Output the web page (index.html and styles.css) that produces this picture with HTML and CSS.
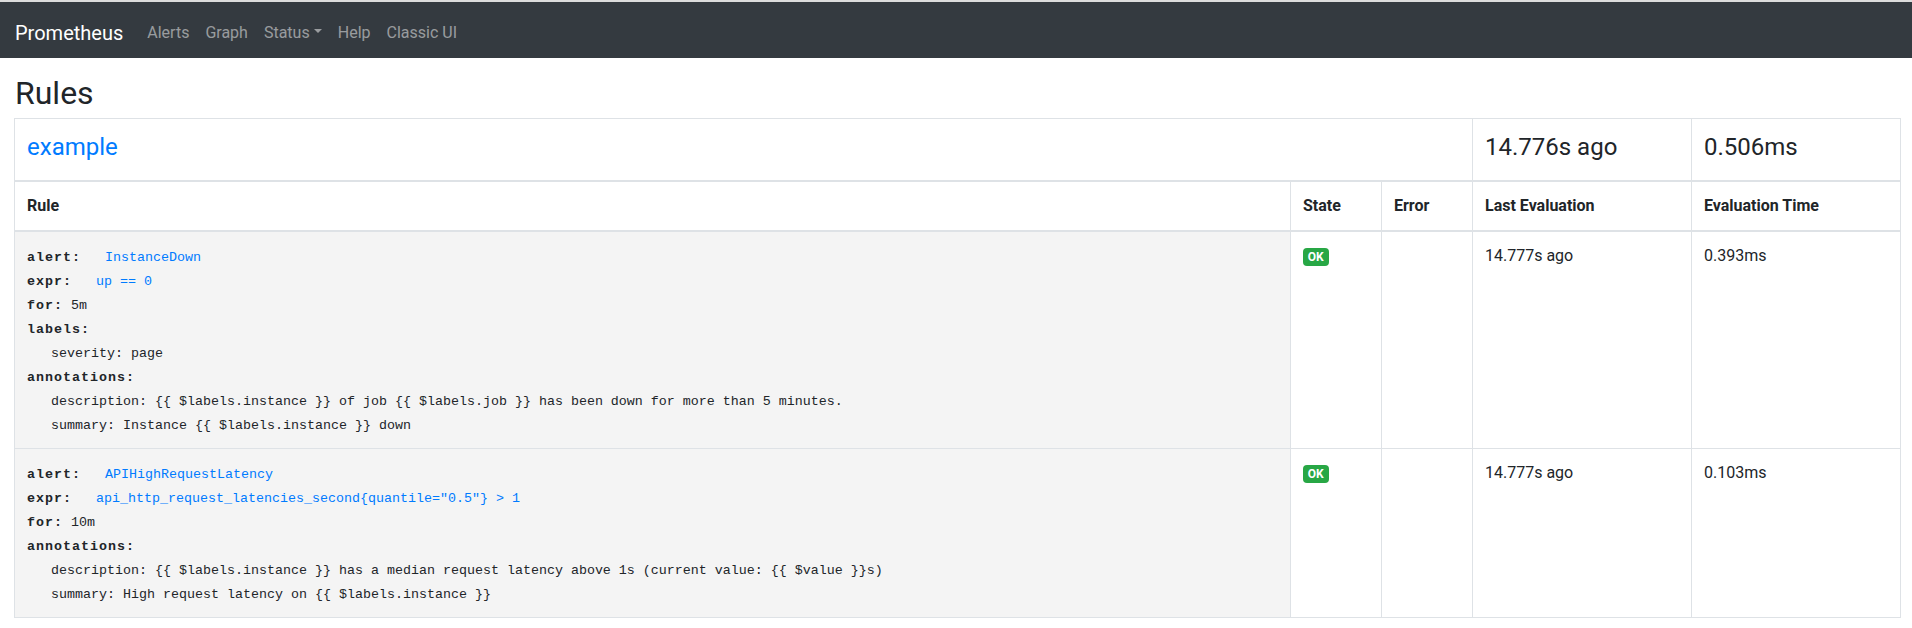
FILE: index.html
```html
<!DOCTYPE html>
<html lang="en">
<head>
<meta charset="utf-8">
<title>Prometheus Time Series Collection and Processing Server</title>
<link rel="stylesheet" href="styles.css">
</head>
<body>
<nav class="navbar">
  <a class="brand" href="#">Prometheus</a>
  <ul class="nav">
    <li><a class="nav-link" href="#">Alerts</a></li>
    <li><a class="nav-link" href="#">Graph</a></li>
    <li><a class="nav-link" href="#">Status<span class="caret"></span></a></li>
    <li><a class="nav-link" href="#">Help</a></li>
    <li><a class="nav-link" href="#">Classic UI</a></li>
  </ul>
</nav>
<main class="container">
  <h2 class="page-title">Rules</h2>
  <table class="rules-table">
    <colgroup>
      <col class="col-rule">
      <col class="col-state">
      <col class="col-error">
      <col class="col-last">
      <col class="col-time">
    </colgroup>
    <thead>
      <tr class="group-row">
        <td colspan="3"><h4 class="group-title"><a href="#example">example</a></h4></td>
        <td><h4 class="group-title">14.776s ago</h4></td>
        <td><h4 class="group-title">0.506ms</h4></td>
      </tr>
      <tr class="head-row">
        <th>Rule</th>
        <th>State</th>
        <th>Error</th>
        <th>Last Evaluation</th>
        <th>Evaluation Time</th>
      </tr>
    </thead>
    <tbody>
      <tr>
        <td class="rule-cell">
          <div><strong>alert:</strong><a class="expr-link" href="#">InstanceDown</a></div>
          <div><strong>expr:</strong><a class="expr-link" href="#">up == 0</a></div>
          <div><strong>for:</strong> 5m</div>
          <div><strong>labels:</strong>
            <div class="indent">severity: page</div>
          </div>
          <div><strong>annotations:</strong>
            <div class="indent">description: {{ $labels.instance }} of job {{ $labels.job }} has been down for more than 5 minutes.</div>
            <div class="indent">summary: Instance {{ $labels.instance }} down</div>
          </div>
        </td>
        <td class="data-cell"><span class="badge">OK</span></td>
        <td class="data-cell"></td>
        <td class="data-cell">14.777s ago</td>
        <td class="data-cell">0.393ms</td>
      </tr>
      <tr>
        <td class="rule-cell">
          <div><strong>alert:</strong><a class="expr-link" href="#">APIHighRequestLatency</a></div>
          <div><strong>expr:</strong><a class="expr-link" href="#">api_http_request_latencies_second{quantile="0.5"} &gt; 1</a></div>
          <div><strong>for:</strong> 10m</div>
          <div><strong>annotations:</strong>
            <div class="indent">description: {{ $labels.instance }} has a median request latency above 1s (current value: {{ $value }}s)</div>
            <div class="indent">summary: High request latency on {{ $labels.instance }}</div>
          </div>
        </td>
        <td class="data-cell"><span class="badge">OK</span></td>
        <td class="data-cell"></td>
        <td class="data-cell">14.777s ago</td>
        <td class="data-cell">0.103ms</td>
      </tr>
    </tbody>
  </table>
</main>
</body>
</html>
```

FILE: styles.css
```css
* {
  box-sizing: border-box;
}

html, body {
  margin: 0;
  padding: 0;
}

body {
  border-top: 2px solid #dcdcdc;
  font-family: Roboto, "Open Sans", sans-serif;
  font-size: 16px;
  line-height: 1.5;
  color: #212529;
  background: #fff;
}

a {
  text-decoration: none;
}

/* Navbar */
.navbar {
  display: flex;
  align-items: center;
  height: 56px;
  padding: 5px 16px 0 15px;
  background: #343a40;
}

.brand {
  font-size: 20px;
  line-height: 30px;
  color: #fff;
  margin-right: 16px;
  white-space: nowrap;
}

.nav {
  display: flex;
  list-style: none;
  margin: 0;
  padding: 0;
}

.nav-link {
  display: block;
  padding: 8px 8px;
  color: rgba(255, 255, 255, 0.5);
  font-size: 16px;
  line-height: 24px;
  white-space: nowrap;
}

.caret {
  display: inline-block;
  width: 0;
  height: 0;
  margin-left: 0.255em;
  vertical-align: 0.255em;
  border-top: 0.3em solid;
  border-right: 0.3em solid transparent;
  border-left: 0.3em solid transparent;
}

/* Page */
.container {
  padding: 0 11px 10px 14px;
}

.page-title {
  margin: 16px 0 6px 1px;
  font-size: 32px;
  font-weight: 400;
  line-height: 1.2;
}

.rules-table {
  width: 100%;
  border-collapse: collapse;
  table-layout: fixed;
  border: 1px solid #dee2e6;
}

.col-rule { width: 1276px; }
.col-state { width: 91px; }
.col-error { width: 91px; }
.col-last { width: 219px; }

.rules-table td,
.rules-table th {
  border: 1px solid #dee2e6;
  padding: 12px;
  text-align: left;
}

.group-row td {
  border-bottom: 2px solid #dee2e6;
  vertical-align: top;
  padding-top: 14px;
  padding-bottom: 10px;
}

.group-title {
  margin: 0 0 8px;
  font-size: 24px;
  font-weight: 400;
  line-height: 1.2;
}

.group-title a {
  color: #007bff;
}

.head-row th {
  border-bottom: 2px solid #dee2e6;
  vertical-align: bottom;
  font-size: 16px;
  font-weight: 700;
  line-height: 24px;
}

.data-cell {
  vertical-align: top;
  font-size: 16px;
  line-height: 24px;
}

.rule-cell {
  vertical-align: top;
  background: #f4f4f4;
  font-family: "Liberation Mono", "Courier New", monospace;
  font-size: 13.333px;
  line-height: 24px;
  color: #212529;
  padding-top: 14px !important;
  padding-bottom: 10px !important;
}

.rule-cell strong {
  font-weight: 700;
  letter-spacing: 1px;
}

.expr-link {
  margin-left: 24px;
  color: #007bff;
}

.indent {
  margin-left: 24px;
}

.badge {
  display: inline-block;
  padding: 3px 4.8px;
  font-size: 12px;
  font-weight: 700;
  line-height: 1;
  color: #fff;
  background: #28a745;
  border-radius: 4px;
  vertical-align: baseline;
}
```
